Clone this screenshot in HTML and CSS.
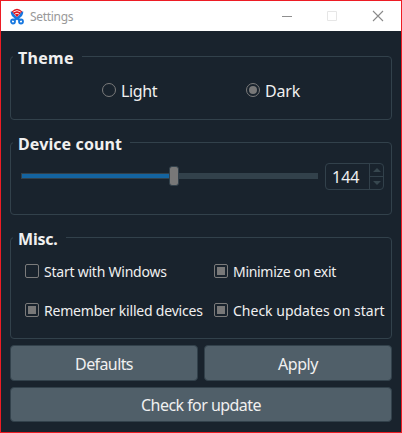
FILE: index.html
```html
<!DOCTYPE html>
<html lang="en">
<head>
<meta charset="utf-8">
<title>Settings</title>
<link rel="stylesheet" href="styles.css">
</head>
<body>
<div class="window">
  <header class="titlebar">
    <svg class="logo" width="14" height="17" viewBox="0 0 14 17" fill="none">
      <path d="M2 3.500Q2 7 5 9L10.500 12.500M12 3.500Q12 7 9 9L3.500 12.500" stroke="#1878e0" stroke-width="2.600"/>
      <circle cx="3" cy="13.500" r="2" stroke="#1878e0" stroke-width="1.800"/>
      <circle cx="11" cy="13.500" r="2" stroke="#1878e0" stroke-width="1.800"/>
      <path d="M1.800 3.500Q7-1.800 12.200 3.500L7 9Z" fill="#e01822"/>
      <path d="M3.300 4Q7 1.200 10.700 4M5 6Q7 4.500 9 6" stroke="#fff" stroke-width=".9"/>
    </svg>
    <span class="title">Settings</span>
    <svg class="controls" width="102" height="12" viewBox="0 0 102 12" fill="none">
      <path d="M0 6.500h10" stroke="#8f8f8f"/>
      <path d="M45.500 1.500h9v9h-9z" stroke="#e6e6e6"/>
      <path d="M91 1l10 10M101 1L91 11" stroke="#8a8a8a" stroke-width="1.100"/>
    </svg>
  </header>
  <main class="content">
    <section class="group theme">
      <h2 class="t-theme">Theme</h2>
      <label class="option large"><i class="radio"></i><span class="t-light">Light</span></label>
      <label class="option large"><i class="radio on"></i><span class="t-dark">Dark</span></label>
    </section>
    <section class="group count">
      <h2 class="t-count">Device count</h2>
      <div class="slider"><div class="fill"></div><div class="handle"></div><div class="rest"></div></div>
      <div class="spin">
        <span class="value">144</span>
        <div class="steps">
          <div><svg width="8" height="4"><path d="M0 4 4 0 8 4z" fill="#37474f"/></svg></div>
          <div><svg width="8" height="4"><path d="M0 0 4 4 8 0z" fill="#37474f"/></svg></div>
        </div>
      </div>
    </section>
    <section class="group misc">
      <h2>Misc.</h2>
      <label class="option"><i class="check"></i><span class="t-start">Start with Windows</span></label>
      <label class="option"><i class="check on"></i><span class="t-min">Minimize on exit</span></label>
      <label class="option"><i class="check on"></i><span class="t-rem">Remember killed devices</span></label>
      <label class="option"><i class="check on"></i><span class="t-upd">Check updates on start</span></label>
    </section>
    <div class="buttons">
      <button><span class="t-def">Defaults</span></button>
      <button><span class="t-apply">Apply</span></button>
      <button class="wide"><span class="t-check">Check for update</span></button>
    </div>
  </main>
</div>
</body>
</html>
```

FILE: styles.css
```css
* { box-sizing: border-box; }
body { margin: 0; font-family: "Noto Sans", "Open Sans", sans-serif; color: #f0f0f0; }
.window { width: 402px; height: 433px; border: 1px solid #ed1c24; background: #19232d; overflow: hidden; }
.titlebar { height: 30px; background: #fff; display: flex; align-items: center; padding: 0 17px 0 9px; }
.logo { flex: none; }
.title { margin-left: 6px; font-size: 12px; color: #999; letter-spacing: -0.3px; }
.controls { margin-left: auto; }
.content { padding: 25px 9px 0; }
.group { position: relative; border: 1px solid #32414b; border-radius: 4px; width: 382px; }
h2 { position: absolute; left: 2px; top: -10px; margin: 0; padding: 0 8px 0 5px; background: #19232d; font-size: 16px; line-height: 22px; font-weight: 700; white-space: nowrap; letter-spacing: -0.2px; }
.t-theme { letter-spacing: 0.3px; }
.t-count { letter-spacing: 0.1px; }
.option { display: flex; align-items: center; font-size: 14px; line-height: 20px; white-space: nowrap; }
.option span { padding-top: 2px; }
.large { font-size: 16px; }
.t-light { letter-spacing: -0.4px; }
.t-dark { letter-spacing: -0.2px; }
.t-start { letter-spacing: -0.23px; }
.t-min { letter-spacing: -0.3px; }
.t-rem { letter-spacing: -0.2px; }
.option i { flex: none; width: 14px; height: 14px; border: 1px solid #7b7b7b; margin-right: 5px; display: grid; place-items: center; }
.radio { border-radius: 50%; }
.check { border-radius: 2px; }
.on::after { content: ""; width: 8px; height: 8px; background: #787878; }
.radio.on::after { border-radius: 50%; }
.theme { height: 64px; display: grid; grid-template-columns: 144px 1fr; padding: 4px 0 0 91px; }
.count { height: 73px; margin-top: 22px; display: flex; align-items: flex-start; padding: 20px 7px 0 10px; }
.slider { width: 297px; height: 20px; margin-top: 3px; display: flex; align-items: center; }
.fill { width: 148px; height: 6px; background: #1464a0; border: 1px solid #32414b; border-right: 0; }
.handle { width: 10px; height: 20px; background: #787878; border: 1px solid #32414b; border-radius: 3px; }
.rest { flex: 1; height: 6px; background: #32414b; }
.spin { width: 59px; height: 27px; margin-left: auto; border: 1px solid #32414b; border-radius: 4px; display: flex; }
.value { flex: 1; padding-left: 6px; font-size: 16px; line-height: 26px; }
.steps { width: 14px; border-left: 1px solid #32414b; display: grid; grid-template-rows: 13px 12px; }
.steps div { display: grid; place-items: center; }
.steps div:first-child { border-bottom: 1px solid #32414b; }
.misc { height: 102px; margin-top: 22px; padding: 13px 0 9px 14px; display: grid; grid-template-columns: 189px 1fr; grid-template-rows: 39px 39px; }
.buttons { width: 382px; margin-top: 6px; display: grid; grid-template-columns: 188px 188px; gap: 6px; grid-template-rows: 36px 35px; }
button { font: 16px "Noto Sans", "Open Sans", sans-serif; color: #f0f0f0; background: #505f69; border: 1px solid #32414b; border-radius: 4px; padding: 1px 0 0; }
.t-def { letter-spacing: -0.6px; }
.t-apply { letter-spacing: -0.4px; }
.t-check { letter-spacing: -0.55px; }
.wide { grid-column: 1 / 3; }
```
